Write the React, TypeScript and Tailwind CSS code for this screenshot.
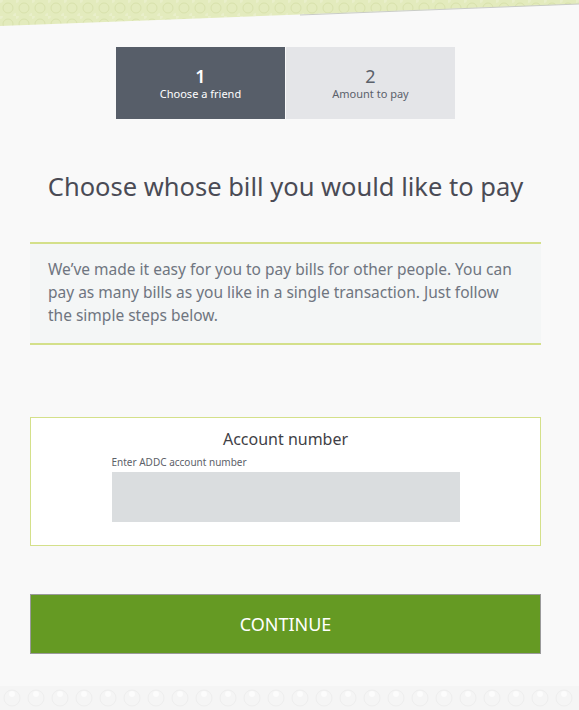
export default function App() {
  const font = { fontFamily: '"Noto Sans", "Open Sans", sans-serif' };

  return (
    <div className="w-[579px] h-[710px] bg-[#f9f9f9] flex flex-col overflow-hidden" style={font}>
      {/* top patterned band */}
      <svg width="579" height="28" viewBox="0 0 579 28" className="block shrink-0">
        <defs>
          <pattern id="tp" width="16" height="16" patternUnits="userSpaceOnUse">
            <rect width="16" height="16" fill="#e3ebbd" />
            <circle cx="8" cy="8" r="5" fill="none" stroke="#d8e1ab" strokeWidth="1" />
            <circle cx="0" cy="0" r="3" fill="#e9efca" />
            <circle cx="16" cy="16" r="3" fill="#e9efca" />
          </pattern>
        </defs>
        <polygon points="0,0 579,0 579,4 0,26" fill="url(#tp)" />
        <line x1="300" y1="15" x2="579" y2="4" stroke="#c9ccc6" strokeWidth="1" />
      </svg>

      <div className="w-[571px] flex flex-col">
        {/* steps */}
        <div className="flex justify-center mt-[19px]">
          <div className="w-[169px] h-[72px] bg-[#575e69] text-white flex flex-col items-center justify-center gap-[1px]">
            <span className="text-[18px] leading-[20px] font-semibold">1</span>
            <span className="text-[11px] leading-[14px]">Choose a friend</span>
          </div>
          <div className="w-[1px]" />
          <div className="w-[169px] h-[72px] bg-[#e4e5e8] text-[#5b616b] flex flex-col items-center justify-center gap-[1px]">
            <span className="text-[18px] leading-[20px]">2</span>
            <span className="text-[11px] leading-[14px]">Amount to pay</span>
          </div>
        </div>

        <h1 className="mt-[51px] text-center text-[25.5px] leading-[32px] text-[#4a4b55]">
          Choose whose bill you would like to pay
        </h1>

        <div className="mx-[30px] mt-[40px] border-y-2 border-[#d4e08a] bg-[#f4f6f6] px-[18px] pt-[14px] pb-[16px]">
          <p className="text-[15.5px] leading-[23px] text-[#6f7580]">
            We’ve made it easy for you to pay bills for other people. You can pay as many bills as you like in a single transaction. Just follow the simple steps below.
          </p>
        </div>

        <div className="mx-[30px] mt-[72px] h-[129px] border border-[#d4e08a] bg-white flex flex-col items-center">
          <div className="mt-[11px] text-[16px] leading-[20px] text-[#3f3f46]">Account number</div>
          <div className="w-[348px] mt-[7px]">
            <div className="text-[10px] leading-[12px] text-[#5c6169]">Enter ADDC account number</div>
            <div className="mt-[4px] h-[50px] bg-[#dadddf]" />
          </div>
        </div>

        <button className="mx-[30px] mt-[48px] h-[60px] bg-[#659a23] border border-[#9a9a9a] text-white text-[18px] flex items-center justify-center">
          CONTINUE
        </button>
      </div>

      {/* bottom patterned band */}
      <svg width="579" height="30" viewBox="0 0 579 30" className="block shrink-0 mt-[32px]">
        <defs>
          <pattern id="bp" width="24" height="24" patternUnits="userSpaceOnUse">
            <rect width="24" height="24" fill="#f5f5f5" />
            <circle cx="12" cy="12" r="8" fill="none" stroke="#eeeeee" strokeWidth="1" />
            <circle cx="12" cy="8" r="3" fill="#fcfcfc" />
          </pattern>
        </defs>
        <rect width="579" height="30" fill="url(#bp)" />
      </svg>
    </div>
  );
}
